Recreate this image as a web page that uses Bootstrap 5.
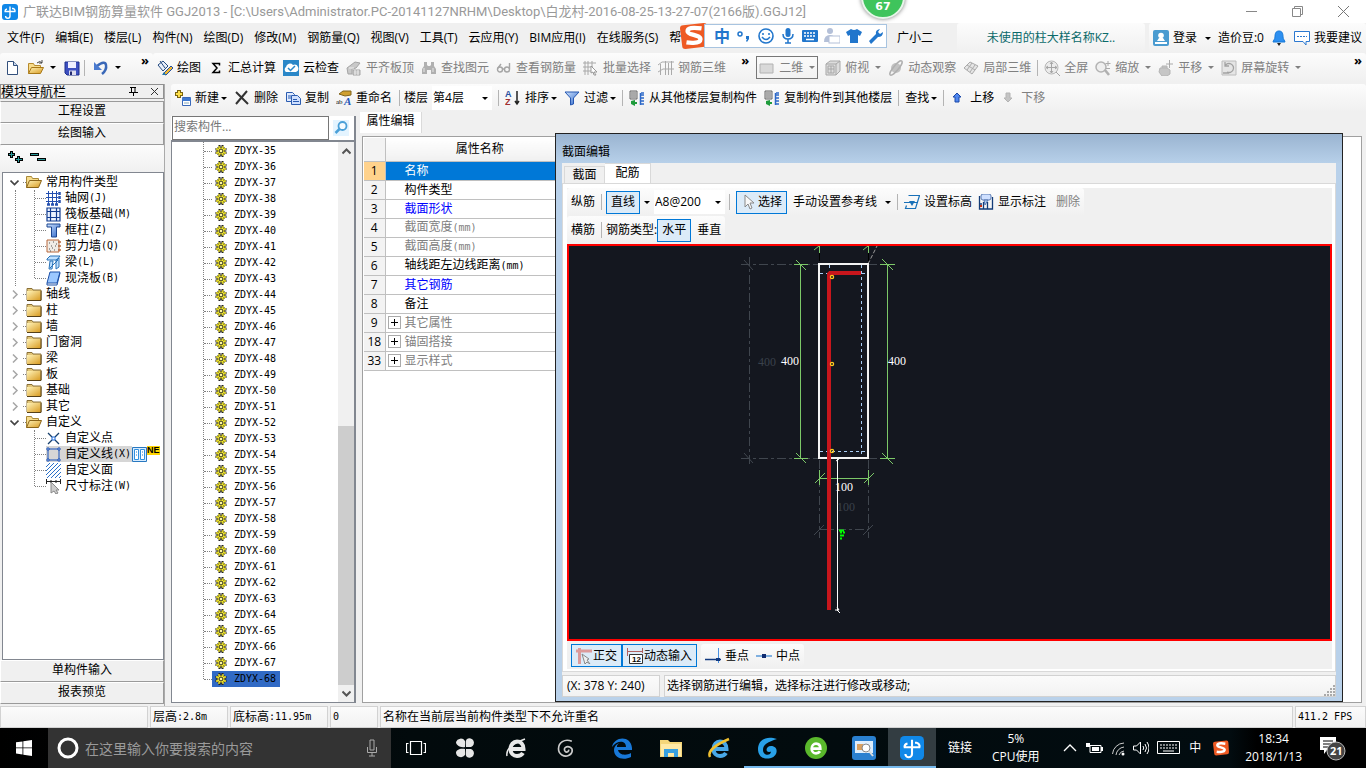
<!DOCTYPE html>
<html lang="zh-CN">
<head>
<meta charset="utf-8">
<meta name="viewport" content="width=device-width, initial-scale=1">
<title>广联达BIM钢筋算量软件 GGJ2013</title>
<link href="https://cdn.jsdelivr.net/npm/bootstrap@5.3.0/dist/css/bootstrap.min.css" rel="stylesheet">
<style>
body{font:12px/16px "Open Sans","Noto Sans CJK SC",sans-serif;color:#000;background:#f0f0f0;white-space:nowrap}
button{border:0;background:none;padding:0;color:inherit;font:inherit}
a{color:inherit;text-decoration:none}
ul{list-style:none;margin:0;padding:0}
svg{flex:none;display:block}
.ic{width:16px;height:16px}
.mono{font-family:"DejaVu Sans Mono",monospace;font-size:10px}
.titlebar{height:23px;background:#fff;color:#999;padding-left:2px}
.title-text{font:13px/16px Roboto,"Noto Sans CJK SC",sans-serif;margin-left:5px}
.title-ctl{width:46px;height:22px}
.menurow{height:30px;background:#f0f0f0}
.menu-links{gap:11px;padding-left:7px}
.strip{background:linear-gradient(#fcfcfc,#f0f0f0);border-radius:3px}
.toolrow{height:31px;padding:0 0 2px}
.toolrow .tool .caret{margin-left:2px}
.tools{gap:7px}
.tools>.vsep{margin:0 -1px}
.tool{display:flex;align-items:center;gap:4px}
.off{color:#808080}
.caret{width:0;height:0;border:3px solid transparent;border-top-color:currentColor;border-bottom:0;flex:none}
.vsep{width:1px;height:16px;background:#b4b4b4;flex:none}
.more{align-self:flex-start;font-weight:700;font-size:13px;line-height:14px}
.quick{width:153px}
.tip-text{width:188px;color:#0b6a6a;height:30px}
.mode{border:1px solid #777;height:23px;padding:0 2px}
.nav-pane{width:165px;border-right:1px solid #aaa;flex:none}
.nav-head{height:15px;border:1px solid #909090;font-size:13px;line-height:13px}
.nav-btn{height:22px;border:1px solid;border-color:#fff #9a9a9a #9a9a9a #fff;background:#f0f0f0;text-align:center;padding-bottom:2px}
.nav-btn.first{border-top-color:#9a9a9a;margin-top:2px}
.nav-btn.last{margin-bottom:2px}
.nav-tools{height:27px}
.tree{border:1px solid #828790;background:#fff;padding-top:1px;margin-left:2px}
.node{display:flex;align-items:center;height:16px}
.node .chev{width:9px;height:9px;margin:0 4px 0 7px}
.node .dash{width:3px;border-top:1px dotted #808080;flex:none}
.node .txt{margin-left:4px;display:flex;align-items:center}
.kids{margin-left:31px;position:relative}
.kids::after{content:"";position:absolute;left:0;top:0;bottom:8px;border-left:1px dotted #808080}
.kids.through::before{content:"";position:absolute;left:-19px;top:0;bottom:0;border-left:1px dotted #808080}
.kids .dash{width:11px;margin-left:1px}
.sel-gray{background:#d6d6d6;height:16px;padding:0 1px}
.new-tag{background:#ffd400;font:700 9px/9px "Liberation Sans",sans-serif;align-self:flex-start}
.right-bar{height:28px;margin-left:2px}
.right-bar .tool .caret{margin-left:-2px}
.floor{width:60px;height:24px;background:#fff;position:relative}
.floor.wide{width:71px}
.floor select{width:100%;height:100%;border:0;background:transparent;appearance:none;font:inherit;padding:0 1px;color:#000}
.floor .caret{position:absolute;right:4px;top:11px;pointer-events:none}
.list-pane{width:185px;border-right:2px solid #828790;background:#fff;flex:none;margin:4px 4px 3px 2px}
.search-row{padding-left:1px}
.search-in{width:157px;height:24px;border:1px solid #767676;padding:0 1px 3px;font:inherit;border-radius:0}
.search-in::placeholder{color:#777}
.listbox{border:1px solid #828790;border-top-width:2px;border-right:0}
.items{margin-left:31px;position:relative;padding-top:1px}
.items::before{content:"";position:absolute;left:0;top:0;height:537px;border-left:1px dotted #808080}
.items li{display:flex;align-items:center;height:16px}
.items .dash{width:8px;margin-left:1px;border-top:1px dotted #808080}
.items .cell{display:flex;align-items:center;gap:7px;height:16px;padding:0 4px 0 3px}
.items .cell.on{background:#316ac5}
.sbar{width:16px;background:#f0f0f0}
.sthumb{height:259px;background:#cdcdcd}
.edit-tab{width:62px;height:21px;background:#fff;border-right:1px solid #dadada;padding-bottom:3px}
.props{border:1px solid #a0a0a0;background:#fff;margin:3px 4px 3px 2px;padding:1px}
.ptable{width:211px;border-collapse:collapse}
.ptable th,.ptable td{height:19px;padding:0;border:1px solid #c0c0c0;font-weight:400;line-height:16px}
.ptable thead th{height:23px;background:linear-gradient(#fff,#f0f0f0);text-align:center;border-top:0}
.ptable .idx{width:21px;text-align:center;background:#f3f3f3;border-left:0}
.ptable td{padding-left:19px}
.ptable td.grp{padding-left:2px}
.ptable .cur th{background:#ffd28c}
.ptable .cur td{background:#0078d7;color:#fff}
.ptable .blue{color:#00f}
.plus{width:13px;height:13px;border:1px solid #aaa;margin-right:4px;color:#000}
.dialog{top:21px;left:195px;right:23px;bottom:4px;border:1px solid #222;background:#b9d1ea;padding:0 6px 4px}
.dlg-title{height:29px;margin:0 -6px;padding:10px 6px 0;background:linear-gradient(#9ab4d1,#b7d0e9)}
.dlg-body{background:#f0f0f0}
.dlg-tab{height:18px;border:1px solid #d9d9d9;width:41px;margin:3px 0 0 2px}
.dlg-tab.on{height:21px;background:#fff;margin:0;width:46px;border-bottom:0;border-left:0;padding-bottom:2px}
.dlg-page{border:4px solid #fff;border-right-width:3px;border-bottom-width:2px;box-shadow:0 0 0 1px #d9d9d9;margin:0 1px 4px 1px}
.dbar{height:28px;gap:6px}
.on-btn{border:1px solid #0078d7;background:#dcebf8;height:23px;padding:0 4px;display:flex;align-items:center;gap:1px}
.cad{border:2px solid #f00;background:#14171f;overflow:hidden}
.cad text{font:12px "Liberation Serif",serif}
.snaps{padding:3px 0 2px}
.pane{border:1px solid #d2d2d2;background:linear-gradient(#fbfbfb,#f2f2f2);height:22px;display:flex;align-items:center;padding-left:2px}
.status{height:22px;gap:2px}
.taskbar{height:40px;background:linear-gradient(90deg,#000 0,#020a0c 30%,#020c10 90%,#000 92%);color:#fff}
.start{width:48px;height:40px}
.task-search{width:343px;height:40px;background:#333;padding:0 13px 0 8px;gap:5px}
.task-search input{background:transparent;border:0;color:#a5a5a5;font:14px/20px "Noto Sans CJK SC",sans-serif;padding:0;min-width:0}
.task-search input::placeholder{color:#9a9a9a}
.app{width:48px;height:40px;display:flex;align-items:center;justify-content:center;margin-left:1px}
.app.run{box-shadow:inset 0 -2px #76b9ed;margin-left:0}
.app.act{background:#333d42}
.clock{line-height:18px}
.ime{left:680px;top:22px;z-index:5}
.ime-bar{background:#fff;border:1px solid #a8c4e0;height:24px;width:183px;margin-left:-4px;gap:6px;padding-left:9px;color:#2176cc}
.ball{left:861px;top:-25px;width:44px;height:44px;border-radius:50%;background:#3fc45c;border:2px solid #e8f5ea;box-shadow:0 0 4px #777;color:#fff;font:700 11px/14px "DejaVu Sans",sans-serif;padding-top:23px;text-align:center;z-index:6}
</style>
</head>
<body class="d-flex flex-column min-vh-100 position-relative overflow-hidden">
<svg width="0" height="0" class="position-absolute">
<defs>
<linearGradient id="gold" x2="1" y2="1"><stop stop-color="#fff3b8"/><stop offset="1" stop-color="#d89a20"/></linearGradient>
<linearGradient id="bl" x2="1" y2="1"><stop stop-color="#cfe4ff"/><stop offset="1" stop-color="#2b64c8"/></linearGradient>
</defs>
<symbol id="logo" viewBox="0 0 16 16"><rect width="16" height="16" rx="3" fill="#1088e8"/><path d="M8 2.500v9.500a2.200 2.200 0 0 1-4.400 0M2.500 7.500h11M10 4.500h1a2.500 2.500 0 0 1 2 3M3 7.500a2.500 2.500 0 0 1 2-2.500" fill="none" stroke="#fff" stroke-width="1.400"/></symbol>
<symbol id="page" viewBox="0 0 16 16"><path d="M3.500 1.500h6l4 4v9h-10z" fill="#fff" stroke="#33507c"/><path d="M9.500 1.500v4h4" fill="#c9d8ee" stroke="#33507c"/></symbol>
<symbol id="open" viewBox="0 0 16 16"><path d="M.5 13.500v-10h5l1 2h6v3" fill="#f7dc8c" stroke="#b78a2c"/><path d="M.5 13.500l3-6h12l-3 6z" fill="url(#gold)" stroke="#a87818"/><path d="M9 3q3-3 5 0M14 0v3h-3" fill="none" stroke="#444"/></symbol>
<symbol id="opened" viewBox="0 0 16 16"><path d="M.5 13.500v-11h5l1 2h6v3" fill="#f7dc8c" stroke="#a88838"/><path d="M.5 13.500l3-7h12l-3 7z" fill="url(#gold)" stroke="#8a6418"/></symbol>
<symbol id="fold" viewBox="0 0 16 16"><path d="M1 4V2.500h5L7 4h8v10H1z" fill="#e2c679" stroke="#8a7038"/><path d="M1 5h14v9H1z" fill="url(#gold)"/><path d="M15 5v9.500H1" fill="none" stroke="#554018"/></symbol>
<symbol id="save" viewBox="0 0 16 16"><path d="M1 2h14v13H3l-2-2z" fill="#3d4fc0" stroke="#1d2e8c"/><path d="M4 2h8v6H4z" fill="#eef"/><path d="M5 10.500h7V15H5z" fill="#dde"/><path d="M6 11.500h2V15H6z" fill="#222a70"/></symbol>
<symbol id="undo" viewBox="0 0 16 16"><path d="M4 6q8-6 9-1 1 5-4 9" fill="none" stroke="#3a68b8" stroke-width="2.500"/><path d="M1 2v8h8z" fill="#4b7bd0"/></symbol>
<symbol id="paint" viewBox="0 0 16 16"><path d="M1 5l5-4 5 5-5 5z" fill="#e8eef8" stroke="#234a80"/><path d="M3 1l5 7" stroke="#234a80"/><path d="M6 14L14 6l2 2-7 7z" fill="#f2b830" stroke="#2450a0"/><path d="M5 15l2-3 2 3z" fill="#27a"/></symbol>
<symbol id="sum" viewBox="0 0 16 16"><path d="M11.500 5.500V3.500H5l4 4.500-4 4.500h6.500v-2" fill="none" stroke="#000" stroke-width="1.500"/></symbol>
<symbol id="cloud" viewBox="0 0 16 16"><path d="M0 0h16v16H0z" fill="#2a87c8"/><path d="M3 12a3 3 0 0 1 0-5 4 4 0 0 1 7-2 3.500 3.500 0 0 1 3 7z" fill="#fff"/><path d="M5 8l2.500 2.500L12 6" fill="none" stroke="#2a87c8" stroke-width="1.500"/></symbol>
<symbol id="slab" viewBox="0 0 16 16"><path d="M1 8l8-6 5 1-4 5-4 1v5H2zM7 10h7v5H7z" fill="#c9c9c9" stroke="#a5a5a5"/><path d="M3 8h5M9 10v5M12 10v5" stroke="#eee"/></symbol>
<symbol id="bino" viewBox="0 0 16 16"><path d="M3 2h3v3l1 1h2l1-1V2h3v4l2 3v5h-5v-4H6v4H1V9l2-3z" fill="#b0b0b0"/><path d="M3 8v4M12 8v4" stroke="#e6e6e6"/></symbol>
<symbol id="glass" viewBox="0 0 16 16"><g fill="none" stroke="#a5a5a5" stroke-width="1.400"><circle cx="4" cy="9.500" r="2.500"/><circle cx="11" cy="9.500" r="2.500"/><path d="M6.500 9h2M2 8l3-4M13.500 9V3"/></g></symbol>
<symbol id="batch" viewBox="0 0 16 16"><path d="M2 1v14M5 1v14M0 3h13M0 7h10M0 11h8M9 1v9" stroke="#a8a8a8"/><path d="M8 6l6 6h-3l2 3h-2l-1-3-2 1z" fill="#fff" stroke="#999"/></symbol>
<symbol id="bars" viewBox="0 0 16 16"><path d="M2.500 4v11M7.500 1v14M13.500 1v14M0 5l4-3h12M0 12l5-3h11M10.500 3v12" fill="none" stroke="#aaa"/></symbol>
<symbol id="plane" viewBox="0 0 16 16"><path d="M1 4h13v9H1z" fill="#d9d9d9" stroke="#b2b2b2"/></symbol>
<symbol id="cube" viewBox="0 0 16 16"><path d="M1 4l4-3h10v10l-4 4H1z" fill="#ddd" stroke="#a7a7a7"/><path d="M1 4h10v11M11 4l4-3M3 6h6v7H3zM6 6v7M3 9h6" fill="none" stroke="#a7a7a7"/></symbol>
<symbol id="orbit" viewBox="0 0 16 16"><circle cx="8" cy="8" r="5" fill="#c2c2c2"/><ellipse cx="8" cy="8" rx="9" ry="2.500" transform="rotate(-50 8 8)" fill="none" stroke="#b0b0b0" stroke-width="1.500"/></symbol>
<symbol id="part" viewBox="0 0 16 16"><path d="M1 8l6-6 8 4-6 8zM4 5l8 5M9 3l-5 7M12 5l-5 7" fill="#e5e5e5" stroke="#aaa"/></symbol>
<symbol id="full" viewBox="0 0 16 16"><circle cx="7.500" cy="7.500" r="6.500" fill="#ececec" stroke="#b6b6b6"/><path d="M7.500 2v11M2 7.500h11M6 4l1.500-2L9 4M6 11l1.500 2L9 11M4 6L2 7.500 4 9M11 6l2 1.500L11 9M12 12l4 4" fill="none" stroke="#a5a5a5"/></symbol>
<symbol id="zoomg" viewBox="0 0 16 16"><circle cx="6" cy="7" r="5" fill="#efefef" stroke="#b3b3b3" stroke-width="1.500"/><path d="M10 10l4 5" stroke="#b0b0b0" stroke-width="2.500"/><path d="M13 1v5M10.500 3.500h5M11 8.500h4" stroke="#aaa"/></symbol>
<symbol id="hand" viewBox="0 0 16 16"><path d="M2 8h7l3 2v4l-3 2H4L1 12zM4 8V6h5v2" fill="#c6c6c6" stroke="#b4b4b4"/><path d="M11.500 0v8M8 4h7" stroke="#aaa"/></symbol>
<symbol id="rot" viewBox="0 0 16 16"><path d="M1 1h14v14H1z" fill="#e5e5e5" stroke="#bcbcbc"/><path d="M4 6a4.500 4.500 0 1 1 2 6M4 2v4h4M2 13h6" fill="none" stroke="#a2a2a2" stroke-width="1.300"/></symbol>
<symbol id="user" viewBox="0 0 16 16"><rect width="16" height="16" rx="2" fill="#4a9bd0"/><circle cx="8" cy="5.500" r="2.800" fill="#fff"/><path d="M2 12h12v2H2zM6 8h4l2 3H4z" fill="#fff"/></symbol>
<symbol id="bell" viewBox="0 0 16 16"><path d="M8 1c3.500 0 4 3 4 6 0 2 2 4 2 5H2c0-1 2-3 2-5 0-3 .5-6 4-6z" fill="#2d8ff0" stroke="#1478d8"/><path d="M6 13h4l-2 3z" fill="#222"/></symbol>
<symbol id="chat" viewBox="0 0 16 16"><path d="M.5 1.500h15v10H12V15l-3-3.500H.5z" fill="#fff" stroke="#2b78d0"/><path d="M3 6.500h10" stroke="#2b78d0" stroke-dasharray="2 1"/></symbol>
<symbol id="newi" viewBox="0 0 16 16"><path d="M4 0v8M0 4h8" stroke="#7a6410" stroke-width="4"/><path d="M4 1v6M1 4h6" stroke="#ffe04a" stroke-width="2"/><path d="M7.500 7.500h8v8h-8z" fill="#fff" stroke="#3a68b8"/><path d="M7 8h9v3H7z" fill="#3f78cf"/><path d="M9 13h5" stroke="#8ab"/></symbol>
<symbol id="xdel" viewBox="0 0 16 16"><path d="M2 2l12 12M13 1L2 14" stroke="#333" stroke-width="2"/></symbol>
<symbol id="copy" viewBox="0 0 16 16"><path d="M1.500 2.500h6l2 2v7h-8z" fill="#dfeaff" stroke="#2b5cb0"/><path d="M6.500 5.500h6l3 3v6h-9z" fill="#cfe0ff" stroke="#2b5cb0"/><path d="M8 9.500h4M8 11.500h6M3 6h3M3 8h3" stroke="#2b5cb0"/></symbol>
<symbol id="funnel" viewBox="0 0 16 16"><path d="M1 2h14l-5.500 6v6l-3 1V8z" fill="url(#bl)" stroke="#2556b0"/></symbol>
<symbol id="lay" viewBox="0 0 16 16"><path d="M1 1h7v8H1z" fill="#ddd" stroke="#666"/><path d="M2 3h5M2 5h5M2 7h5" stroke="#777"/><path d="M12 3h3M11 5h4M11 8h4M11 11h4M11 14h4M11.500 3v12" stroke="#2c68c8" stroke-width="1.500"/><path d="M2 11l4-1v2h2v2H6v2l-4-2z" fill="#1f9c3c"/></symbol>
<symbol id="up" viewBox="0 0 16 16"><path d="M7 3l4 4H9v5H5V7H3z" fill="#4f86ee" stroke="#1a48a8"/></symbol>
<symbol id="down" viewBox="0 0 16 16"><path d="M7 12L3 8h2V3h4v5h2z" fill="#c4c4c4" stroke="#b4b4b4"/></symbol>
<symbol id="mag" viewBox="0 0 16 16"><path d="M0 0h16v16H0z" fill="#e4f4ff"/><circle cx="9.500" cy="6" r="4" fill="#f4fbff" stroke="#4aa0d8" stroke-width="1.800"/><path d="M6.500 9l-4 4" stroke="#4aa0d8" stroke-width="2.500"/></symbol>
<symbol id="gear" viewBox="0 0 12 12"><path d="M3.500 0h2v2h1V0h2v2h1v1h2v2.500h-1.500v1h1.500V9h-2v1h-1v2h-2v-1.500h-1V12h-2v-2h-1V9h-2V6.500H2v-1H.5V3h2V2h1z" fill="#222"/><path d="M4 1v10M8 1v10M1 4h10M1 8h10" stroke="#f7ec30" stroke-width="1.300"/><circle cx="6" cy="6" r="3.800" fill="#f7ec30"/><circle cx="6" cy="6" r="1.800" fill="#fff8a0" stroke="#222" stroke-width=".8"/><path d="M3.500 3.500l1 1M8.500 3.500l-1 1M3.500 8.500l1-1M8.500 8.500l-1-1M6 1.500v2M6 8.500v2M1.500 6h2M8.500 6h2" stroke="#222" stroke-width=".8"/></symbol>
<symbol id="cd" viewBox="0 0 9 9"><path d="M.5 2.500l4 4 4-4" fill="none" stroke="#444" stroke-width="1.700"/></symbol>
<symbol id="cr" viewBox="0 0 9 9"><path d="M3 .5l4 4-4 4" fill="none" stroke="#a6a6a6" stroke-width="1.500"/></symbol>
<symbol id="t1" viewBox="0 0 15 15"><path d="M2.500 0v13M6.500 0v13M10.500 0v13M0 2.500h12M0 6.500h12M0 10.500h12" stroke="#2450b0"/><path d="M13.500 1v11M1 13.500h11" stroke="#2450b0" stroke-dasharray="3 1" stroke-width="2.500"/></symbol>
<symbol id="t2" viewBox="0 0 15 15"><path d="M1 1h13v13H1zM4.500 4.500h6v6h-6zM1 4.500h13M1 10.500h13M4.500 1v13M10.500 1v13" fill="#eaf2ff" stroke="#123c90" stroke-width="1.200"/></symbol>
<symbol id="t3" viewBox="0 0 15 15"><path d="M1 1h13v3h-3.500v10h-5V4H1z" fill="url(#bl)" stroke="#1c4690"/></symbol>
<symbol id="t4" viewBox="0 0 15 15"><path d="M1 1h12v12H1z" fill="#f0ece6" stroke="#b8683c"/><path d="M3 4h1M7 3h1M5 7h1M9 7h1M3 10h1M8 11h1M10 5h1M6 9h1M4 12h1" stroke="#555"/><path d="M12 3h3M12 7h3M12 11h3" stroke="#b8683c" stroke-width="1.500"/></symbol>
<symbol id="t5" viewBox="0 0 15 15"><path d="M1 4l3-3h10l-3 4H1zM4 6h3l-1 8H3zM10 5l3-2v9l-3 2zM4 13l8-8" fill="#bfe0ff" stroke="#2872b8"/></symbol>
<symbol id="t6" viewBox="0 0 15 15"><path d="M4 1h10l-3 11H1z" fill="#9cc8ff" stroke="#1c50a8"/><path d="M1 12v2h10l3-12" fill="none" stroke="#1c50a8"/></symbol>
<symbol id="t7" viewBox="0 0 15 15"><path d="M2 2l4 4M13 2L9 6M2 13l4-4M13 13L9 9" stroke="#18406c" stroke-width="1.300"/><path d="M6 6h3v3H6z" fill="#fff" stroke="#1c68d8"/></symbol>
<symbol id="t8" viewBox="0 0 15 15"><path d="M2 2h11v11H2z" fill="none" stroke="#1850b8"/><path d="M1 1h2v2H1zM12 1h2v2h-2zM1 12h2v2H1zM12 12h2v2h-2z" fill="#fff" stroke="#1850b8"/></symbol>
<symbol id="t9" viewBox="0 0 15 15"><path d="M0 4l4-4M0 8l8-8M0 12l12-12M1 15L15 1M5 15L15 5M9 15l6-6M13 15l2-2" stroke="#2a70c8"/></symbol>
<symbol id="t10" viewBox="0 0 15 15"><path d="M0 2.500h15M.5 0v5M14.500 0v5M5 1v3M10 1v3" stroke="#222"/><path d="M5 3v11l3-2 2 3 2-1-2-3h3z" fill="#ccc" stroke="#888"/></symbol>
<symbol id="cursor" viewBox="0 0 16 16"><path d="M4 1v12l3-3 2 5 2-1-2-5h4z" fill="#f8f8f8" stroke="#888"/></symbol>
<symbol id="elev" viewBox="0 0 16 16"><path d="M4.500 1.500h11l-4 13H1.500l1-3M0 8.500h14" fill="none" stroke="#1870b8" stroke-width="1.200"/><path d="M5 7h6l-3 5z" fill="#1870b8"/></symbol>
<symbol id="show" viewBox="0 0 16 16"><path d="M1.500 2v13h13V3M1 10h3M9.500 8v7M5.500 8v7" fill="none" stroke="#133c78" stroke-width="1.300"/><rect x="3" y="0" width="10" height="6" rx="2" fill="#cfe0ff" stroke="#5878b0"/><path d="M2 11h2v2H2z" fill="#d03010"/><path d="M6 6l1 5 3-5z" fill="#a8c8f0" stroke="#5878b0"/></symbol>
<symbol id="ortho" viewBox="0 0 16 16"><path d="M0 3h16M3.500 0v16" stroke="#dc9a9a" stroke-width="3"/><path d="M6 6l7 5-2 1 3 4-3-2-2 2z" fill="#eee" stroke="#888"/></symbol>
<symbol id="perp" viewBox="0 0 16 16"><path d="M0 11.500h16" stroke="#123a80" stroke-width="1.500"/><path d="M13.500 0v15" stroke="#4a90e0"/><path d="M11 10h4v3h-4z" fill="#123a80"/></symbol>
<symbol id="mid" viewBox="0 0 16 16"><path d="M0 8h16" stroke="#5898d8" stroke-width="1.500"/><path d="M6 6h4v4H6z" fill="#102c70"/></symbol>
<symbol id="sg" viewBox="0 0 26 26"><path d="M3 3l19-2q3 0 3 3l1 16q0 3-3 3L5 25q-3 0-3-3L0 6q0-3 3-3z" fill="#ee5a24"/><path d="M20 6q-13-2-13 2.500c0 4 12 3 12 7.500 0 5-13 3-13 3" fill="none" stroke="#fff" stroke-width="4"/></symbol>
<symbol id="ee" viewBox="0 0 24 24"><path d="M6 13h12.500c0-5-3-7.500-6.500-7.500S5.500 8.500 5.500 13s3 7 6.500 7 5-1.500 6-3" fill="none" stroke="currentColor" stroke-width="4"/></symbol>
<symbol id="gg" viewBox="0 0 24 24"><path d="M19 4C10 0 3 6 3 13s7 10 12 8 6-8 2-10-9 1-6 5c2 2 5 0 4-2" fill="none" stroke="currentColor" stroke-width="2"/></symbol>
<symbol id="gb" viewBox="0 0 24 24"><path d="M21 3C9-1 2 5 2 13s6 11 13 9 8-12 0-12c-5 0-6 6-2 6 2 0 3-1 3-2l-2 4c-3 2-7 0-7-4 0-6 5-8 14-11z" fill="currentColor"/></symbol>
</svg>

<header class="titlebar d-flex align-items-center">
<svg class="ic"><use href="#logo"/></svg>
<span class="title-text">广联达BIM钢筋算量软件 GGJ2013 - [C:\Users\Administrator.PC-20141127NRHM\Desktop\白龙村-2016-08-25-13-27-07(2166版).GGJ12]</span>
<div class="ms-auto d-flex">
<button class="title-ctl" aria-label="最小化"><svg class="mx-auto" width="11" height="11"><path d="M0 5.500h11" stroke="#888"/></svg></button>
<button class="title-ctl" aria-label="还原"><svg class="mx-auto" width="11" height="11"><path d="M.5 2.500h8v8h-8zM2.500 2V.5h8v8H9" fill="none" stroke="#888"/></svg></button>
<button class="title-ctl" aria-label="关闭"><svg class="mx-auto" width="11" height="11"><path d="M0 0l11 11M11 0L0 11" stroke="#777"/></svg></button>
</div>
</header>

<div class="menurow d-flex align-items-center">
<nav class="menu-links d-flex">
<a href="#">文件(F)</a><a href="#">编辑(E)</a><a href="#">楼层(L)</a><a href="#">构件(N)</a><a href="#">绘图(D)</a><a href="#">修改(M)</a><a href="#">钢筋量(Q)</a><a href="#">视图(V)</a><a href="#">工具(T)</a><a href="#">云应用(Y)</a><a href="#">BIM应用(I)</a><a href="#">在线服务(S)</a><a href="#">帮</a>
</nav>
<a href="#" class="ms-auto me-4">广小二</a>
<a href="#" class="tip-text strip d-flex align-items-center justify-content-center me-1">未使用的柱大样名称KZ..</a>
<div class="strip tools d-flex align-items-center px-1 h-100">
<button class="tool"><svg class="ic"><use href="#user"/></svg>登录<span class="caret ms-1"></span></button>
<button>造价豆:0</button>
<button class="tool" aria-label="通知"><svg class="ic"><use href="#bell"/></svg></button>
<button class="tool"><svg class="ic"><use href="#chat"/></svg>我要建议</button>
</div>
</div>

<div class="toolrow d-flex">
<div class="strip quick d-flex align-items-center ps-1">
<button aria-label="新建"><svg class="ic"><use href="#page"/></svg></button>
<button class="tool ms-2" aria-label="打开"><svg class="ic"><use href="#open"/></svg><span class="caret"></span></button>
<button class="ms-2" aria-label="保存"><svg class="ic"><use href="#save"/></svg></button>
<span class="vsep mx-1"></span>
<button class="tool ms-1" aria-label="撤销"><svg class="ic"><use href="#undo"/></svg><span class="caret"></span></button>
<button class="more ms-auto me-1">»</button>
</div>
<div class="strip tools d-flex align-items-center flex-grow-1 ps-1">
<button class="tool"><svg class="ic"><use href="#paint"/></svg>绘图</button>
<button class="tool"><svg class="ic"><use href="#sum"/></svg>汇总计算</button>
<button class="tool"><svg class="ic"><use href="#cloud"/></svg>云检查</button>
<button class="tool off"><svg class="ic"><use href="#slab"/></svg>平齐板顶</button>
<button class="tool off"><svg class="ic"><use href="#bino"/></svg>查找图元</button>
<button class="tool off"><svg class="ic"><use href="#glass"/></svg>查看钢筋量</button>
<button class="tool off"><svg class="ic"><use href="#batch"/></svg>批量选择</button>
<button class="tool off"><svg class="ic"><use href="#bars"/></svg>钢筋三维</button>
<button class="more ms-2">»</button>
<button class="tool off mode"><svg class="ic"><use href="#plane"/></svg>二维<span class="caret"></span></button>
<button class="tool off"><svg class="ic"><use href="#cube"/></svg>俯视<span class="caret"></span></button>
<button class="tool off"><svg class="ic"><use href="#orbit"/></svg>动态观察</button>
<button class="tool off"><svg class="ic"><use href="#part"/></svg>局部三维</button>
<span class="vsep"></span>
<button class="tool off"><svg class="ic"><use href="#full"/></svg>全屏</button>
<button class="tool off"><svg class="ic"><use href="#zoomg"/></svg>缩放<span class="caret"></span></button>
<button class="tool off"><svg class="ic"><use href="#hand"/></svg>平移<span class="caret"></span></button>
<button class="tool off"><svg class="ic"><use href="#rot"/></svg>屏幕旋转<span class="caret"></span></button>
<button class="more ms-auto me-1">»</button>
</div>
</div>

<main class="d-flex flex-grow-1">
<aside class="nav-pane d-flex flex-column">
<div class="nav-head d-flex align-items-center"><span>模块导航栏</span>
<button class="ms-auto me-2" aria-label="固定"><svg width="9" height="9"><path d="M2.500 0v6M1 .5h6M0 5.500h9M4.500 6v3M6 0v6" stroke="#000" fill="none"/></svg></button>
<button class="ms-1 me-1" aria-label="关闭"><svg width="9" height="9"><path d="M1 1l7 7M8 1L1 8" stroke="#333"/></svg></button></div>
<button class="nav-btn first">工程设置</button>
<button class="nav-btn">绘图输入</button>
<div class="strip nav-tools ps-2 pt-1"><svg width="42" height="18"><path d="M3.500 2v7M0 5.500h7M10.500 7v7M7 10.500h8" stroke="#000" stroke-width="3"/><path d="M3.500 3v5M1 5.500h5M10.500 8v5M8 10.500h6" stroke="#2a9a9a"/><path d="M22 5.500h9M29 10.500h9" stroke="#000" stroke-width="3"/><path d="M23 5.500h7M30 10.500h7" stroke="#2a9a9a"/></svg></div>
<ul class="tree flex-grow-1">
<li><div class="node"><svg class="chev"><use href="#cd"/></svg><i class="dash"></i><svg class="ic"><use href="#opened"/></svg><span class="txt">常用构件类型</span></div>
<ul class="kids through">
<li class="node"><i class="dash"></i><svg width="15" height="15"><use href="#t1"/></svg><span class="txt">轴网<span class="mono">(J)</span></span></li>
<li class="node"><i class="dash"></i><svg width="15" height="15"><use href="#t2"/></svg><span class="txt">筏板基础<span class="mono">(M)</span></span></li>
<li class="node"><i class="dash"></i><svg width="15" height="15"><use href="#t3"/></svg><span class="txt">框柱<span class="mono">(Z)</span></span></li>
<li class="node"><i class="dash"></i><svg width="15" height="15"><use href="#t4"/></svg><span class="txt">剪力墙<span class="mono">(Q)</span></span></li>
<li class="node"><i class="dash"></i><svg width="15" height="15"><use href="#t5"/></svg><span class="txt">梁<span class="mono">(L)</span></span></li>
<li class="node"><i class="dash"></i><svg width="15" height="15"><use href="#t6"/></svg><span class="txt">现浇板<span class="mono">(B)</span></span></li>
</ul></li>
<li class="node"><svg class="chev"><use href="#cr"/></svg><i class="dash"></i><svg class="ic"><use href="#fold"/></svg><span class="txt">轴线</span></li>
<li class="node"><svg class="chev"><use href="#cr"/></svg><i class="dash"></i><svg class="ic"><use href="#fold"/></svg><span class="txt">柱</span></li>
<li class="node"><svg class="chev"><use href="#cr"/></svg><i class="dash"></i><svg class="ic"><use href="#fold"/></svg><span class="txt">墙</span></li>
<li class="node"><svg class="chev"><use href="#cr"/></svg><i class="dash"></i><svg class="ic"><use href="#fold"/></svg><span class="txt">门窗洞</span></li>
<li class="node"><svg class="chev"><use href="#cr"/></svg><i class="dash"></i><svg class="ic"><use href="#fold"/></svg><span class="txt">梁</span></li>
<li class="node"><svg class="chev"><use href="#cr"/></svg><i class="dash"></i><svg class="ic"><use href="#fold"/></svg><span class="txt">板</span></li>
<li class="node"><svg class="chev"><use href="#cr"/></svg><i class="dash"></i><svg class="ic"><use href="#fold"/></svg><span class="txt">基础</span></li>
<li class="node"><svg class="chev"><use href="#cr"/></svg><i class="dash"></i><svg class="ic"><use href="#fold"/></svg><span class="txt">其它</span></li>
<li><div class="node"><svg class="chev"><use href="#cd"/></svg><i class="dash"></i><svg class="ic"><use href="#opened"/></svg><span class="txt">自定义</span></div>
<ul class="kids">
<li class="node"><i class="dash"></i><svg width="15" height="15"><use href="#t7"/></svg><span class="txt">自定义点</span></li>
<li class="node"><i class="dash"></i><span class="sel-gray d-flex align-items-center ps-0"><svg width="15" height="15"><use href="#t8"/></svg><span class="txt">自定义线<span class="mono">(X)</span></span></span><svg width="15" height="15"><path d="M.5.500h14v14H.5z" fill="#d8ecff" stroke="#2878c0"/><path d="M2.500 2.500h4v10h-4zM8.500 2.500h4v10h-4z" fill="#fff" stroke="#3090e0"/><path d="M4 5h1M4 8h1M10 5h1M10 8h1" stroke="#2878c0"/></svg><span class="new-tag">NE</span></li>
<li class="node"><i class="dash"></i><svg width="15" height="15"><use href="#t9"/></svg><span class="txt">自定义面</span></li>
<li class="node"><i class="dash"></i><svg width="15" height="15"><use href="#t10"/></svg><span class="txt">尺寸标注<span class="mono">(W)</span></span></li>
</ul></li>
</ul>
<button class="nav-btn">单构件输入</button>
<button class="nav-btn last">报表预览</button>
</aside>

<div class="d-flex flex-column flex-grow-1 ps-1">
<div class="right-bar strip tools d-flex align-items-center ps-1">
<button class="tool"><svg class="ic"><use href="#newi"/></svg>新建<span class="caret"></span></button>
<button class="tool"><svg class="ic"><use href="#xdel"/></svg>删除</button>
<button class="tool"><svg class="ic"><use href="#copy"/></svg>复制</button>
<button class="tool"><svg class="ic"><path d="M3 4l4-3h8v4l-6 1z" fill="#d0a030" stroke="#80641c"/><text x="0" y="14" font-size="7" font-family="Liberation Serif">ab</text><text x="8" y="15" font-size="11" font-weight="700" font-style="italic" fill="#2456b8" font-family="Liberation Serif">A</text></svg>重命名</button>
<div class="d-flex align-items-center gap-1"><span class="vsep"></span><label for="floor">楼层</label>
<div class="floor"><select id="floor"><option>第4层</option></select><span class="caret"></span></div></div>
<span class="vsep"></span>
<button class="tool"><svg class="ic"><text x="0" y="7" font-size="9" font-weight="700" fill="#2850a0" font-family="Liberation Sans">A</text><text x="0" y="15" font-size="9" font-weight="700" fill="#a03030" font-family="Liberation Sans">Z</text><path d="M12 1v12M10 11l2 3 2-3" fill="none" stroke="#222" stroke-width="1.500"/></svg>排序<span class="caret"></span></button>
<button class="tool"><svg class="ic"><use href="#funnel"/></svg>过滤<span class="caret"></span></button>
<span class="vsep"></span>
<button class="tool"><svg class="ic"><use href="#lay"/></svg>从其他楼层复制构件</button>
<button class="tool"><svg class="ic"><use href="#lay"/></svg>复制构件到其他楼层</button>
<span class="vsep"></span>
<button class="tool">查找<span class="caret"></span></button>
<span class="vsep"></span>
<button class="tool"><svg class="ic"><use href="#up"/></svg>上移</button>
<button class="tool off"><svg class="ic"><use href="#down"/></svg>下移</button>
</div>
<div class="d-flex flex-grow-1">
<section class="list-pane d-flex flex-column">
<div class="search-row d-flex align-items-center">
<input class="search-in" type="search" placeholder="搜索构件..." aria-label="搜索构件">
<button class="ms-1" aria-label="搜索"><svg class="ic"><use href="#mag"/></svg></button></div>
<div class="listbox d-flex flex-grow-1">
<ul class="items flex-grow-1 mono" id="items"></ul>
<div class="sbar d-flex flex-column align-items-center">
<svg class="mt-1" width="9" height="12"><path d="M.5 7.500l4-4 4 4" fill="none" stroke="#555" stroke-width="2"/></svg>
<div class="sthumb mt-auto w-100"></div>
<svg class="my-1" width="9" height="9"><path d="M.5 2.500l4 4 4-4" fill="none" stroke="#555" stroke-width="2"/></svg>
</div></div>
</section>
<section class="flex-grow-1 d-flex flex-column position-relative">
<button class="edit-tab">属性编辑</button>
<div class="props flex-grow-1">
<table class="ptable">
<thead><tr><th class="idx"></th><th>属性名称</th></tr></thead>
<tbody>
<tr class="cur"><th class="idx">1</th><td>名称</td></tr>
<tr><th class="idx">2</th><td>构件类型</td></tr>
<tr><th class="idx">3</th><td class="blue">截面形状</td></tr>
<tr><th class="idx">4</th><td class="off">截面宽度<span class="mono">(mm)</span></td></tr>
<tr><th class="idx">5</th><td class="off">截面高度<span class="mono">(mm)</span></td></tr>
<tr><th class="idx">6</th><td>轴线距左边线距离<span class="mono">(mm)</span></td></tr>
<tr><th class="idx">7</th><td class="blue">其它钢筋</td></tr>
<tr><th class="idx">8</th><td>备注</td></tr>
<tr><th class="idx">9</th><td class="off grp"><div class="d-flex align-items-center"><svg class="plus" viewBox="0 0 11 11"><path d="M2 5.500h7M5.500 2v7" stroke="#000"/></svg>其它属性</div></td></tr>
<tr><th class="idx">18</th><td class="off grp"><div class="d-flex align-items-center"><svg class="plus" viewBox="0 0 11 11"><path d="M2 5.500h7M5.500 2v7" stroke="#000"/></svg>锚固搭接</div></td></tr>
<tr><th class="idx">33</th><td class="off grp"><div class="d-flex align-items-center"><svg class="plus" viewBox="0 0 11 11"><path d="M2 5.500h7M5.500 2v7" stroke="#000"/></svg>显示样式</div></td></tr>
</tbody></table>
</div>

<div class="dialog position-absolute d-flex flex-column" role="dialog" aria-label="截面编辑">
<div class="dlg-title">截面编辑</div>
<div class="dlg-body flex-grow-1 d-flex flex-column">
<div class="d-flex"><button class="dlg-tab">截面</button><button class="dlg-tab on">配筋</button></div>
<div class="dlg-page flex-grow-1 d-flex flex-column">
<div class="d-flex"><div class="dbar strip d-flex align-items-center px-1">
<button>纵筋</button>
<div class="d-flex align-items-center gap-1"><span class="vsep"></span><button class="on-btn">直线</button><span class="caret"></span>
<div class="floor wide"><select aria-label="钢筋信息"><option>A8@200</option></select><span class="caret"></span></div><span class="vsep"></span></div>
<button class="on-btn"><svg class="ic"><use href="#cursor"/></svg>选择</button>
<button class="tool">手动设置参考线<span class="caret ms-1"></span></button>
<span class="vsep"></span>
<button class="tool"><svg class="ic"><use href="#elev"/></svg>设置标高</button>
<button class="tool"><svg class="ic"><use href="#show"/></svg>显示标注</button>
<button class="off ms-1">删除</button>
</div></div>
<div class="d-flex"><div class="dbar strip d-flex align-items-center px-1">
<button>横筋</button>
<div class="d-flex align-items-center"><span class="vsep me-1"></span>钢筋类型:<button class="on-btn">水平</button></div>
<button>垂直</button>
</div></div>
<div class="cad flex-grow-1 position-relative">
<svg class="position-absolute w-100 h-100" role="img" aria-label="配筋图">
<g transform="translate(-569,-246)" fill="none">
<g stroke="#40464e" stroke-dasharray="9 3 3 3"><path d="M749.500 257v208M741 264.500h78M741 458.500h78M868 264.500h9M868 458.500h9M819.500 460v78M868.500 460v78M819 529.500h50"/></g>
<path d="M744 260l9 10M744 453l9 10M814 535l10-10M863 535l10-10" stroke="#40464e"/>
<path d="M868 264l9-18" stroke="#999" stroke-dasharray="4 2"/>
<path d="M819.500 250v11M868.500 250v11" stroke="#000"/>
<g stroke="#7cc868"><path d="M800.500 264v195M794 264.500h14M794 458.500h14M796 260l10 10M796 453l10 10M887.500 264v195M880 264.500h15M880 458.500h15M882 259l11 11M882 453l11 11M819 478.500h50M819.500 470v15M868.500 470v15M815 483l10-10M864 483l10-10M819.500 246v7M868.500 246v7M814 250l5-4M863 250l5-4"/></g>
<rect x="819" y="264" width="49" height="194" stroke="#f4f4f4" stroke-width="2"/>
<path d="M861.500 265v192M829.500 265v8M820 273.500h48M820 451.500h48" stroke="#a8cdf5" stroke-dasharray="3 3"/>
<path d="M861 273h-31l-1 1v336" stroke="#c8161c" stroke-width="4"/>
<g stroke="#ffc820" stroke-width="1.300"><circle cx="832" cy="277" r="1.600"/><circle cx="832" cy="364" r="1.600"/><circle cx="832" cy="451" r="1.600"/></g>
<path d="M837.500 459v152M836 461l3-2M835 610h4l-2-3M838 611l2 2" stroke="#fff"/>
<g fill="#fff"><text x="781" y="365">400</text><text x="888" y="365">400</text><text x="835" y="491">100</text></g>
<g fill="#3a414b"><text x="758" y="366">400</text><text x="837" y="511">100</text></g>
<path d="M839 530.500h5M840 532.500h2M843 532.500h2M840 535.500h4M840 538.500h2" stroke="#0f0" stroke-width="2"/>
</g></svg></div>
<div class="snaps d-flex"><div class="d-flex align-items-center ps-1 ms-0"><button class="on-btn"><svg class="ic"><use href="#ortho"/></svg>正交</button><button class="on-btn"><svg class="ic"><path d="M0 3.500h16M.5 0v8M15.500 0v5" stroke="#b06060"/><path d="M2.500 6.500h13v9h-13z" fill="#fff" stroke="#333"/><text x="5" y="14" font-size="8" font-weight="700" font-family="Liberation Sans">12</text></svg>动态输入</button></div>
<div class="strip tools d-flex align-items-center px-1 ms-1"><button class="tool"><svg class="ic"><use href="#perp"/></svg>垂点</button><button class="tool"><svg class="ic"><use href="#mid"/></svg>中点</button></div></div>
</div>
<div class="d-flex gap-1"><div class="pane ps-1" style="width:98px">(X: 378 Y: 240)</div><div class="pane flex-grow-1">选择钢筋进行编辑，选择标注进行修改或移动;<svg class="ms-auto mt-2" width="12" height="12"><path d="M10 2h2M7 5h2M10 5h2M4 8h2M7 8h2M10 8h2M1 11h2M4 11h2M7 11h2M10 11h2" stroke="#aaa" stroke-width="2"/></svg></div></div>
</div></div>
</section>
</div></div>
</main>

<footer class="status d-flex">
<div class="pane" style="width:148px"></div><div class="pane" style="width:78px">层高<span class="mono">:2.8m</span></div><div class="pane" style="width:98px">底标高<span class="mono">:11.95m</span></div><div class="pane" style="width:48px"><span class="mono">0</span></div><div class="pane flex-grow-1">名称在当前层当前构件类型下不允许重名</div><div class="pane" style="width:71px"><span class="mono">411.2 FPS</span></div>
</footer>

<div class="taskbar d-flex align-items-center">
<button class="start" aria-label="开始"><svg class="mx-auto" width="16" height="16"><path d="M0 2.300L6.500 1.400v6.100H0zM7.300 1.300L16 0v7.500H7.300zM0 8.300h6.500v6.200L0 13.600zM7.300 8.300H16V16l-8.700-1.300z" fill="#fff"/></svg></button>
<div class="task-search d-flex align-items-center"><svg width="24" height="24"><circle cx="12" cy="12" r="9" fill="none" stroke="#fff" stroke-width="3"/></svg><input class="flex-grow-1" type="text" placeholder="在这里输入你要搜索的内容" aria-label="搜索"><svg width="12" height="18"><path d="M4 1h4v10H4zM1.500 8v5.500h9V8M6 13.500V17M3 17h6" fill="none" stroke="#aaa"/></svg></div>
<button class="app" aria-label="任务视图"><svg width="20" height="14"><path d="M4.500.5h11v13h-11zM2.500 2.500H.5v9h2M17.500 2.500h2v9h-2" fill="none" stroke="#fff" stroke-width="1.200"/></svg></button>
<button class="app" aria-label="应用"><svg width="22" height="24"><g fill="#e6e6e6"><path d="M11 11V5a5 5 0 0 0-9 1c0 3 4 6 9 5zM12 11h5a4.500 4.500 0 1 0-4-8c-2 2-1 5-1 8zM11 13v6a5 5 0 0 1-9-2c0-3 4-5 9-4zM12 13h5a4.500 4.500 0 1 1-4 8c-2-2-1-5-1-8z"/></g></svg></button>
<button class="app ms-1" aria-label="浏览器"><svg width="24" height="24" color="#e8e8e8"><use href="#ee"/><path d="M2 20Q0 10 20 3" stroke="#e8e8e8" fill="none" stroke-width="1.500"/></svg></button>
<button class="app" aria-label="应用"><svg width="20" height="22" color="#ccc"><use href="#gg"/></svg></button>
<button class="app ms-2" aria-label="Edge"><svg width="24" height="24"><path d="M2 11C4 0 21-1 22 12v2H8c1 5 8 6 13 3v4C13 25 4 22 4 14c0-3 2-6 6-7-3 1-3 3-3 4h9c0-7-9-7-14 0z" fill="#1878d8"/></svg></button>
<button class="app" aria-label="文件资源管理器"><svg width="22" height="20"><path d="M0 2h8l2 2h12v15H0z" fill="#f5d67a"/><path d="M1 6h20v12H1z" fill="#ffe9a6"/><path d="M4 19v-8h14v8h-4v-4H8v4z" fill="#38a0e0"/></svg></button>
<button class="app" aria-label="Internet Explorer"><svg width="26" height="24" color="#48a8e8"><use href="#ee"/><path d="M3 21Q-1 13 22 3" stroke="#f0c030" fill="none" stroke-width="2.500"/></svg></button>
<button class="app run" aria-label="应用"><svg width="24" height="24" color="#28a0e8"><use href="#gb"/></svg></button>
<button class="app run" aria-label="浏览器"><svg width="24" height="24" color="#fff"><circle cx="12" cy="12" r="11" fill="#5ab82c"/><use href="#ee" x="4" y="4" width="16" height="16"/></svg></button>
<button class="app run" aria-label="看图"><svg width="24" height="24"><rect width="24" height="24" rx="3" fill="#2a80d0"/><path d="M3 5h18v12H3z" fill="#dfeefc"/><path d="M5 8h6v6H5z" fill="#d8a060"/><circle cx="14" cy="12" r="4" fill="#fff" stroke="#888"/><path d="M17 15l4 5" stroke="#ddd" stroke-width="2"/></svg></button>
<button class="app run act" aria-label="广联达"><svg width="24" height="24"><use href="#logo"/></svg></button>
<span class="ms-2 ps-1">链接</span>
<span class="text-center ms-3 ps-1 clock">5%<br>CPU使用</span>
<div class="d-flex align-items-center ms-auto gap-2">
<svg width="14" height="10"><path d="M1 8l6-6 6 6" fill="none" stroke="#fff" stroke-width="1.300"/></svg>
<svg width="18" height="14"><path d="M5 4.500h11v7H5z" fill="none" stroke="#fff"/><path d="M7 6h7v4H7zM16 6h2v4h-2zM1 2h4v4H1z" fill="#fff"/></svg>
<svg width="14" height="16"><path d="M1.500 14A12 12 0 0 1 13 3M5 15a9 9 0 0 1 8-8M8 15a6 6 0 0 1 5-4" fill="none" stroke="#ccc"/><circle cx="12" cy="14" r="1.500" fill="#fff"/></svg>
<svg width="16" height="14"><path d="M.5 5h3l4-4v12l-4-4h-3zM10 5q1.500 2 0 4M12 3q3 4 0 8M14 1q4 6 0 12" fill="none" stroke="#fff"/></svg>
<svg width="24" height="14"><path d="M.5.500h22v12H.5z" fill="none" stroke="#fff"/><path d="M3 4h18M3 7h18" stroke="#fff" stroke-dasharray="2 1"/><path d="M6 10h11" stroke="#fff"/></svg>
<span>中</span>
<svg class="ms-1" width="16" height="16"><use href="#sg"/></svg>
<span class="text-center clock ms-2">18:34<br>2018/1/13</span>
<svg class="ms-2 me-3" width="32" height="26"><path d="M2 2h16v13H9l-3 4v-4H2z" fill="#fff"/><path d="M5 6h10M5 9h10M5 12h7" stroke="#000"/><circle cx="18" cy="16" r="9" fill="#444" stroke="#bbb"/><text x="12" y="20" font-size="11" font-weight="700" fill="#fff">21</text></svg>
</div></div>

<div class="ime position-absolute d-flex align-items-center">
<svg width="28" height="28"><use href="#sg"/></svg>
<div class="ime-bar d-flex align-items-center"><b class="fs-6">中</b>
<svg class="ic"><circle cx="4" cy="6" r="2" fill="none" stroke="#2176cc" stroke-width="1.500"/><path d="M10 8h3v3l-2 3-1-1 1-2h-1z" fill="#2176cc"/></svg>
<svg class="ic"><circle cx="8" cy="8" r="7" fill="none" stroke="#2176cc" stroke-width="1.600"/><path d="M5 5v2M11 5v2M4 9q4 5 8 0" fill="none" stroke="#2176cc" stroke-width="1.500"/></svg>
<svg class="ic"><rect x="5.500" y="0" width="5" height="9" rx="2.500" fill="#2176cc"/><path d="M3 6q0 5 5 5t5-5M8 11v4M5 15h6" fill="none" stroke="#2176cc" stroke-width="1.500"/></svg>
<svg class="ic"><rect y="2" width="16" height="12" rx="1" fill="#2176cc"/><path d="M2 5h12M2 8h12" stroke="#fff" stroke-dasharray="2 1" stroke-width="1.500"/><path d="M4 11.500h8" stroke="#fff" stroke-width="1.500"/></svg>
<svg class="ic"><circle cx="6" cy="3" r="3" fill="#b4c0d8"/><path d="M0 14q0-7 6-7t6 7z" fill="#b4c0d8"/><rect x="5" y="8" width="11" height="7" fill="#fff" stroke="#b4c0d8"/></svg>
<svg class="ic"><path d="M5 1q3 2 6 0l5 3-2 4-2-1v8H4V7L2 8 0 4z" fill="#2176cc"/></svg>
<svg class="ic"><path d="M1 13l7-7q-1-4 4-5l-2 3 2 2 3-2q0 5-5 5l-7 7z" fill="#2176cc"/></svg>
</div></div>
<div class="ball position-absolute">67</div>

<script src="https://cdn.jsdelivr.net/npm/bootstrap@5.3.0/dist/js/bootstrap.bundle.min.js"></script>
<script>
const list = document.getElementById('items');
for (let n = 35; n <= 68; n++) {
  list.insertAdjacentHTML('beforeend', `<li><i class="dash"></i><span class="cell${n === 68 ? ' on' : ''}"><svg width="12" height="12"><use href="#gear"/></svg>ZDYX-${n}</span></li>`);
}
</script>
</body>
</html>
